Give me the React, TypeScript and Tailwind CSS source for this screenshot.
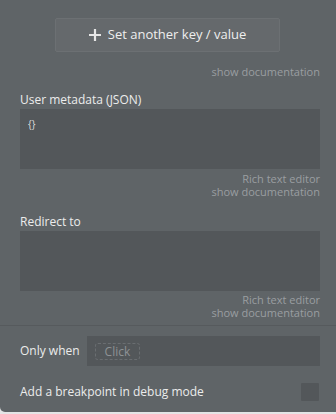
import React from 'react';

const Doc: React.FC<{ rich?: boolean }> = ({ rich }) => (
  <div className="text-right text-[11px] leading-[13px] text-[#9a9ea1]">
    {rich && (
      <>
        Rich text editor
        <br />
      </>
    )}
    show documentation
  </div>
);

const App: React.FC = () => {
  return (
    <div className="h-[414px] w-[336px] bg-[#e4e5e6] font-['Open_Sans',sans-serif]">
      <div className="h-[412px] rounded-bl-[5px] bg-[#5f6467] overflow-hidden">
        <div className="pl-5 pr-4">
          {/* Button */}
          <div className="pt-[18px] pl-[35px]">
            <button className="flex h-[34px] w-[225px] items-center justify-center gap-[7px] rounded-[2px] border border-[#6c7073] bg-[#65696c] text-[13px] text-[#eeeeee]">
              <svg width="12" height="12" viewBox="0 0 12 12">
                <path d="M6 0v12M0 6h12" stroke="#e6e6e6" strokeWidth="2.2" />
              </svg>
              Set another key / value
            </button>
          </div>
          <div className="mt-[13px]">
            <Doc />
          </div>

          {/* User metadata */}
          <div className="mt-[14px] text-[12px] leading-[16px] text-[#ececec]">User metadata (JSON)</div>
          <div className="mt-[1px] h-[60px] bg-[#53575a] px-2 pt-2 text-[10px] leading-[14px] text-[#dddddd]">{'{}'}</div>
          <div className="mt-[3px]">
            <Doc rich />
          </div>

          {/* Redirect */}
          <div className="mt-[16px] text-[12px] leading-[16px] text-[#ececec]">Redirect to</div>
          <div className="mt-[1px] h-[60px] bg-[#53575a]" />
          <div className="mt-[2px]">
            <Doc rich />
          </div>
        </div>

        <div className="mt-[6px] border-t border-[#565a5d]" />

        <div className="pl-5 pr-4">
          <div className="mt-[10px] flex items-center gap-[7px]">
            <span className="text-[12px] text-[#ececec]">Only when</span>
            <div className="flex h-[30px] flex-1 items-center bg-[#53575a] px-2">
              <span className="rounded-[3px] border border-dashed border-[#6a6e71] px-[9px] text-[12px] leading-[15px] text-[#8e9295]">
                Click
              </span>
            </div>
          </div>
          <div className="mt-[17px] flex items-center justify-between">
            <span className="text-[12px] text-[#ececec]">Add a breakpoint in debug mode</span>
            <div className="mr-px h-[18px] w-[18px] rounded-[1px] bg-[#53575a]" />
          </div>
        </div>
      </div>
    </div>
  );
};

export default App;
